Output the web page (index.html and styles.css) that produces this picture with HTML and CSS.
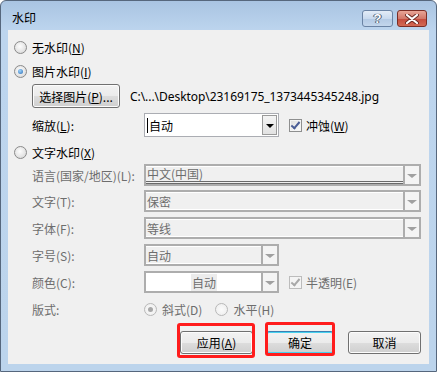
FILE: index.html
```html
<!DOCTYPE html>
<html lang="zh-CN">
<head>
    <meta charset="UTF-8">
    <title>水印</title>
    <link rel="stylesheet" href="styles.css">
</head>
<body>
    <div class="window">
        <div class="titlebar">
            <span class="title">水印</span>
            <div class="caption-btns">
                <span class="cap-btn help">?</span>
                <span class="cap-btn close">
                    <svg width="14" height="10" viewBox="0 0 14 10">
                        <path d="M2 1 L12 9 M12 1 L2 9" stroke="#6b2a24" stroke-width="4" stroke-linecap="round"/>
                        <path d="M2 1 L12 9 M12 1 L2 9" stroke="#fff" stroke-width="2.2" stroke-linecap="round"/>
                    </svg>
                </span>
            </div>
        </div>

        <div class="client">
            <div class="opt-row row-none">
                <span class="radio"></span>
                <span>无水印(<u>N</u>)</span>
            </div>
            <div class="opt-row">
                <span class="radio on"></span>
                <span>图片水印(<u>I</u>)</span>
            </div>
            <div class="pic-row">
                <span class="btn pick-btn">选择图片(<u>P</u>)...</span>
                <span class="path">C:\...\Desktop\23169175_1373445345248.jpg</span>
            </div>
            <div class="field-row scale-row">
                <span class="label">缩放(<u>L</u>):</span>
                <div class="combo short">
                    <span class="combo-text"><span class="caret"></span>自动</span>
                    <span class="combo-arrow"></span>
                </div>
                <span class="check on"></span>
                <span class="check-label">冲蚀(<u>W</u>)</span>
            </div>
            <div class="opt-row row-text">
                <span class="radio"></span>
                <span>文字水印(<u>X</u>)</span>
            </div>

            <div class="field-row off">
                <span class="label">语言(国家/地区)(L):</span>
                <div class="combo disabled wide">
                    <span class="combo-text lined">中文(中国)</span>
                    <span class="combo-arrow"></span>
                </div>
            </div>
            <div class="field-row off gap4">
                <span class="label">文字(T):</span>
                <div class="combo disabled wide">
                    <span class="combo-text">保密</span>
                    <span class="combo-arrow"></span>
                </div>
            </div>
            <div class="field-row off gap5">
                <span class="label">字体(F):</span>
                <div class="combo disabled wide">
                    <span class="combo-text">等线</span>
                    <span class="combo-arrow"></span>
                </div>
            </div>
            <div class="field-row off gap5">
                <span class="label">字号(S):</span>
                <div class="combo disabled short">
                    <span class="combo-text">自动</span>
                    <span class="combo-arrow"></span>
                </div>
            </div>
            <div class="field-row off gap5">
                <span class="label">颜色(C):</span>
                <div class="combo disabled short white">
                    <span class="combo-text centered"><span class="hl">自动</span></span>
                    <span class="combo-arrow"></span>
                </div>
                <span class="check on dim"></span>
                <span class="check-label">半透明(E)</span>
            </div>
            <div class="field-row off gap5">
                <span class="label">版式:</span>
                <span class="radio on dim"></span>
                <span class="radio-label">斜式(D)</span>
                <span class="radio dim second"></span>
                <span class="radio-label">水平(H)</span>
            </div>

            <div class="button-row">
                <span class="btn action mark-apply">应用(<u>A</u>)</span>
                <span class="btn action ok mark-ok">确定</span>
                <span class="btn action cancel">取消</span>
            </div>
        </div>
    </div>
</body>
</html>
```

FILE: styles.css
```css
body {
    margin: 0;
    font-family: "Noto Sans CJK SC", sans-serif;
    font-size: 12px;
    color: #000;
    background: #fff;
}
u {
    text-underline-offset: 1px;
}
.window {
    width: 437px;
    height: 372px;
    box-sizing: border-box;
    border: 1px solid #56677d;
    border-radius: 6px 6px 0 0;
    background: linear-gradient(#a9c4e2, #bdd5ee 30px, #bcd4ec);
    padding: 0 7px 7px 7px;
    display: flex;
    flex-direction: column;
}
.titlebar {
    height: 29px;
    display: flex;
    align-items: center;
    justify-content: space-between;
}
.title {
    padding-left: 4px;
    padding-top: 3px;
}
.caption-btns {
    align-self: flex-start;
    margin-top: 9px;
    margin-right: 2px;
    display: flex;
    gap: 4px;
}
.cap-btn {
    height: 17px;
    box-sizing: border-box;
    border-radius: 3px;
    display: flex;
    align-items: center;
    justify-content: center;
}
.help {
    width: 31px;
    border: 1px solid #6a83a4;
    background: linear-gradient(#e3ecf7, #c9daee 50%, #b2c9e4 51%, #c3d6ec);
    color: #fff;
    font-family: "Liberation Sans", sans-serif;
    font-weight: bold;
    font-size: 13px;
    text-shadow: 0 0 1px #4a5a70, 0 0 1px #4a5a70, 1px 0 0 #4a5a70, -1px 0 0 #4a5a70;
}
.close {
    width: 30px;
    border: 1px solid #7b2d25;
    background: linear-gradient(#e8a597, #d2786a 50%, #c44a3c 51%, #d36a55);
}
.client {
    flex: 1;
    background: #f0f0f0;
    padding: 0 8px 10px 6px;
    display: flex;
    flex-direction: column;
}
.opt-row {
    height: 24px;
    display: flex;
    align-items: center;
    gap: 5px;
}
.row-none {
    margin-top: 5px;
}
.row-text {
    margin-top: 3px;
}
.radio {
    width: 13px;
    height: 13px;
    box-sizing: border-box;
    border-radius: 50%;
    border: 1px solid #8a8a8a;
    background: radial-gradient(circle at 45% 40%, #fdfdfd, #e4e4e4 60%, #cfcfcf);
    display: flex;
    align-items: center;
    justify-content: center;
    flex-shrink: 0;
}
.radio.on::after {
    content: "";
    width: 5px;
    height: 5px;
    border-radius: 50%;
    background: radial-gradient(circle at 40% 35%, #9fd4fb, #2b6cb5);
}
.radio.dim {
    border-color: #b8b8b8;
    background: radial-gradient(#fbfbfb, #ececec);
}
.radio.on.dim::after {
    background: #a8a8a8;
}
.pic-row {
    margin-top: 1px;
    height: 24px;
    display: flex;
    align-items: center;
    padding-left: 18px;
}
.btn {
    box-sizing: border-box;
    border: 1px solid #707070;
    border-radius: 3px;
    background: linear-gradient(#f2f2f2, #ebebeb 50%, #dddddd 51%, #cfcfcf);
    box-shadow: inset 0 0 0 1px #fcfcfc;
    display: flex;
    align-items: center;
    justify-content: center;
}
.pick-btn {
    width: 88px;
    height: 24px;
}
.path {
    margin-left: 10px;
    font-family: "Noto Sans", sans-serif;
    font-size: 12px;
    letter-spacing: -0.05px;
}
.field-row {
    height: 22px;
    display: flex;
    align-items: center;
    padding-left: 18px;
}
.scale-row {
    margin-top: 5px;
    height: 24px;
}
.gap4 {
    margin-top: 4px;
}
.gap5 {
    margin-top: 5px;
}
.label {
    width: 112px;
    flex-shrink: 0;
}
.off {
    color: #6d6d6d;
}
.combo {
    height: 100%;
    box-sizing: border-box;
    display: flex;
    border: 1px solid #abadb3;
    background: #fff;
}
.combo.short {
    width: 135px;
}
.combo.wide {
    width: 279px;
}
.combo-text {
    flex: 1;
    display: flex;
    align-items: center;
    padding-left: 2px;
}
.caret {
    width: 1px;
    height: 15px;
    background: #000;
    margin-right: 1px;
}
.combo-arrow {
    width: 15px;
    margin: 1px;
    box-sizing: border-box;
    border: 1px solid #9a9a9a;
    background: linear-gradient(#f4f4f4, #e2e2e2);
    display: flex;
    align-items: center;
    justify-content: center;
}
.combo-arrow::after {
    content: "";
    border-left: 4px solid transparent;
    border-right: 4px solid transparent;
    border-top: 4px solid #000;
    margin-top: 1px;
}
.combo.disabled {
    border: 2px solid #adadad;
    background: #f0f0f0;
}
.combo.disabled .combo-text {
    border-top: 1px solid #fff;
    border-bottom: 1px solid #fff;
    padding-left: 1px;
}
.combo.disabled.white .combo-text {
    background: #fff;
}
.combo-text.lined {
    position: relative;
    align-items: flex-start;
    line-height: 14px;
}
.combo-text.lined::after {
    content: "";
    position: absolute;
    left: 0;
    right: 0;
    bottom: -1px;
    border-bottom: 3px double #6a6a6a;
}
.combo-text.centered {
    justify-content: center;
    padding-left: 28px;
}
.hl {
    background: #ececec;
    padding: 0 1px;
}
.combo.disabled .combo-arrow {
    width: 16px;
    margin: 0;
    border: none;
    border-left: 2px solid #adadad;
    background: #f4f4f4;
}
.combo.disabled .combo-arrow::after {
    border-top-color: #a0a0a0;
    border-left-width: 5px;
    border-right-width: 5px;
}
.check {
    width: 13px;
    height: 13px;
    box-sizing: border-box;
    border: 1px solid #8e8f8f;
    background: linear-gradient(135deg, #dcdcdc, #fefefe);
    box-shadow: inset 0 0 0 1px #f4f4f4;
    margin-left: 10px;
    position: relative;
    flex-shrink: 0;
}
.check.on::after {
    content: "";
    position: absolute;
    left: 3px;
    top: 0;
    width: 3px;
    height: 7px;
    border-right: 2px solid #4a5d96;
    border-bottom: 2px solid #4a5d96;
    transform: rotate(40deg);
}
.check.dim {
    border-color: #bcbcbc;
    background: #f4f4f4;
}
.check.dim::after {
    border-color: #a8a8a8;
}
.check-label {
    margin-left: 4px;
}
.radio-label {
    margin-left: 5px;
}
.radio.second {
    margin-left: 13px;
}
.button-row {
    margin-top: auto;
    display: flex;
    justify-content: flex-end;
}
.action {
    width: 73px;
    height: 23px;
}
.ok {
    width: 68px;
    margin-left: 13px;
    border-color: #3c7fb1;
    box-shadow: inset 0 0 0 1px #48d1ef;
}
.cancel {
    margin-left: 14px;
}
.mark-apply,
.mark-ok {
    position: relative;
}
.mark-apply::after {
    content: "";
    position: absolute;
    left: -4px;
    right: -3px;
    top: -9px;
    bottom: -5px;
    border: 3px solid #ff1c1c;
    border-radius: 3px;
}
.mark-ok::after {
    content: "";
    position: absolute;
    left: -2px;
    right: -2px;
    top: -10px;
    bottom: -3px;
    border: 3px solid #ff1c1c;
    border-radius: 3px;
}
```
